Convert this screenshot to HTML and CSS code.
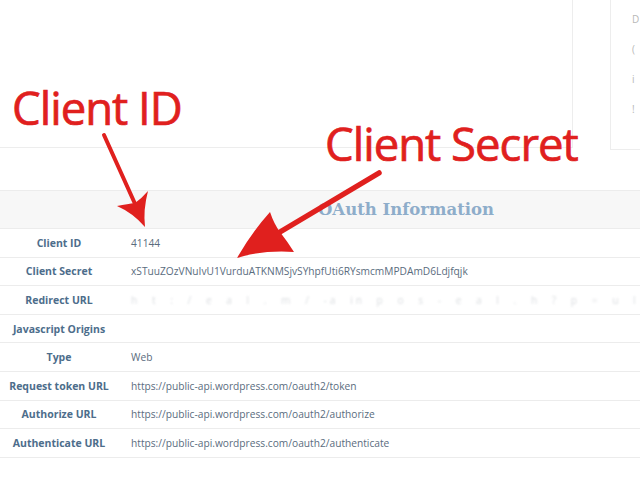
FILE: index.html
```html
<!DOCTYPE html>
<html>
<head>
<meta charset="utf-8">
<link rel="stylesheet" href="styles.css">
</head>
<body>
<div class="page">
  <div class="top">
    <div class="card"></div>
    <div class="side">
      <div class="side-item">D</div>
      <div class="side-item">(</div>
      <div class="side-item">i</div>
      <div class="side-item">!</div>
    </div>
  </div>
  <div class="oauth">
    <div class="oauth-head">OAuth Information</div>
    <div class="row"><div class="label">Client ID</div><div class="value">41144</div></div>
    <div class="row"><div class="label">Client Secret</div><div class="value">xSTuuZOzVNuIvU1VurduATKNMSjvSYhpfUti6RYsmcmMPDAmD6Ldjfqjk</div></div>
    <div class="row"><div class="label">Redirect URL</div><div class="value redacted">h t : / e a l . m / -a in p o s - e a l . h ? p = u l c z</div></div>
    <div class="row"><div class="label">Javascript Origins</div><div class="value"></div></div>
    <div class="row"><div class="label">Type</div><div class="value">Web</div></div>
    <div class="row"><div class="label">Request token URL</div><div class="value">https://public-api.wordpress.com/oauth2/token</div></div>
    <div class="row"><div class="label">Authorize URL</div><div class="value">https://public-api.wordpress.com/oauth2/authorize</div></div>
    <div class="row"><div class="label">Authenticate URL</div><div class="value">https://public-api.wordpress.com/oauth2/authenticate</div></div>
  </div>

  <div class="note note-id">Client ID</div>
  <div class="note note-secret">Client Secret</div>
  <svg class="arrows" width="640" height="480" viewBox="0 0 640 480">
    <line x1="104" y1="135" x2="136" y2="206" stroke="#e0201e" stroke-width="4" stroke-linecap="round"/>
    <path d="M145,227 Q133,213 117,206 Q128,204 135,203 Q142,198 148,191 Q143,210 145,227 Z" fill="#e0201e"/>
    <line x1="379" y1="173" x2="280" y2="232" stroke="#e0201e" stroke-width="5.5" stroke-linecap="round"/>
    <path d="M237,258 Q252,232 270,212 Q274,224 280,232 Q287,241 294,252 Q262,250 237,258 Z" fill="#e0201e"/>
  </svg>
</div>
</body>
</html>
```

FILE: styles.css
```css
html, body {
  margin: 0;
  padding: 0;
  background: #ffffff;
}

.page {
  position: relative;
  width: 640px;
  height: 480px;
  overflow: hidden;
  font-family: "Open Sans", "Liberation Sans", sans-serif;
}

.top {
  display: flex;
  height: 190px;
  gap: 37px;
}

.card {
  width: 573px;
  height: 148px;
  flex: none;
  border-right: 1px solid #ededed;
  border-bottom: 1px solid #ededed;
  box-sizing: border-box;
}

.side {
  flex: 1;
  height: 150px;
  border-left: 1px solid #ededed;
  border-bottom: 1px solid #ededed;
  box-sizing: border-box;
  padding: 12px 0 0 21px;
  overflow: hidden;
  white-space: nowrap;
}

.side-item {
  font-size: 10px;
  color: #b8b8b8;
  height: 30px;
  line-height: 14px;
}

.oauth {
  border-top: 1px solid #ececec;
}

.oauth-head {
  height: 37px;
  background: #f7f7f7;
  border-bottom: 1px solid #ececec;
  padding-left: 318px;
  font-family: "DejaVu Serif", "Liberation Serif", serif;
  font-weight: bold;
  font-size: 16.5px;
  line-height: 37px;
  color: #8eadca;
  white-space: nowrap;
}

.row {
  display: grid;
  grid-template-columns: 118px 1fr;
  height: 28.6px;
  border-bottom: 1px solid #ececec;
  box-sizing: border-box;
  align-items: center;
}

.label {
  text-align: center;
  font-weight: bold;
  font-size: 10.5px;
  color: #4d6d8b;
  white-space: nowrap;
}

.value {
  padding-left: 13px;
  font-size: 10.2px;
  color: #5a6c7e;
  white-space: nowrap;
  overflow: hidden;
}

.value.redacted {
  overflow: visible;
  color: rgba(120, 130, 140, 0.28);
  filter: blur(0.8px);
  letter-spacing: 3px;
  word-spacing: 6px;
}

.note {
  position: absolute;
  font-family: "Open Sans", "Liberation Sans", sans-serif;
  color: #e0201e;
  font-size: 45.5px;
  letter-spacing: -1px;
  line-height: 1;
  white-space: nowrap;
  -webkit-text-stroke: 0.7px #e0201e;
}

.note-id {
  left: 12px;
  top: 85px;
}

.note-secret {
  left: 325px;
  top: 121px;
}

.arrows {
  position: absolute;
  left: 0;
  top: 0;
}
```
